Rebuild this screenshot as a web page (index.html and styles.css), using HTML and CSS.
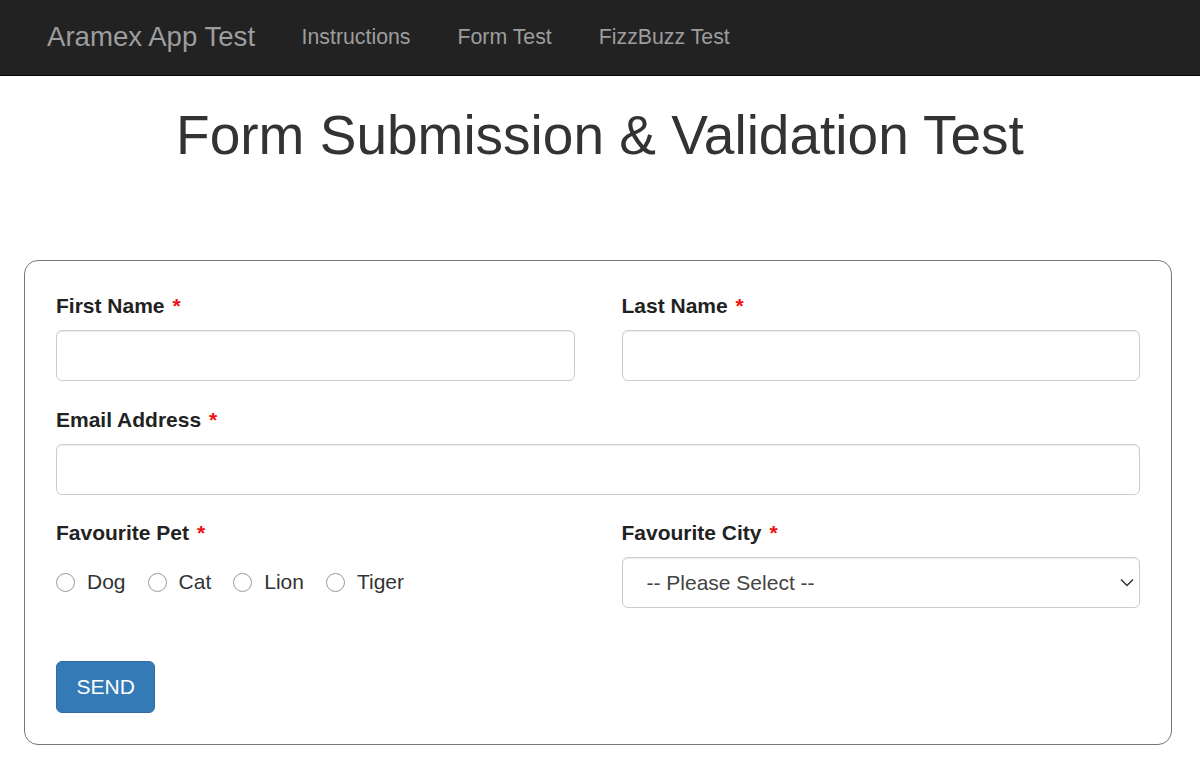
FILE: index.html
```html
<!DOCTYPE html>
<html lang="en">
<head>
<meta charset="utf-8">
<title>Form Submission &amp; Validation Test</title>
<link rel="stylesheet" href="styles.css">
</head>
<body>
<nav class="navbar">
  <a class="brand" href="#">Aramex App Test</a>
  <a class="nav-link" href="#">Instructions</a>
  <a class="nav-link" href="#">Form Test</a>
  <a class="nav-link" href="#">FizzBuzz Test</a>
</nav>
<main class="page">
  <h1 class="title">Form Submission &amp; Validation Test</h1>
  <form class="card">
    <div class="row">
      <div class="group">
        <label class="label">First Name <span class="req">*</span></label>
        <input class="control" type="text">
      </div>
      <div class="group">
        <label class="label">Last Name <span class="req">*</span></label>
        <input class="control" type="text">
      </div>
    </div>
    <div class="group">
      <label class="label">Email Address <span class="req">*</span></label>
      <input class="control" type="email">
    </div>
    <div class="row">
      <div class="group">
        <label class="label">Favourite Pet <span class="req">*</span></label>
        <div class="radios">
          <label class="radio"><input type="radio" name="pet"><span>Dog</span></label>
          <label class="radio"><input type="radio" name="pet"><span>Cat</span></label>
          <label class="radio"><input type="radio" name="pet"><span>Lion</span></label>
          <label class="radio"><input type="radio" name="pet"><span>Tiger</span></label>
        </div>
      </div>
      <div class="group">
        <label class="label">Favourite City <span class="req">*</span></label>
        <div class="select-wrap">
          <select class="control select">
            <option>-- Please Select --</option>
          </select>
          <svg class="chevron" width="14" height="9" viewBox="0 0 14 9"><path d="M1 1.5 L7 7.5 L13 1.5" fill="none" stroke="#333" stroke-width="1.5"/></svg>
        </div>
      </div>
    </div>
    <div class="actions">
      <button class="btn" type="button">SEND</button>
    </div>
  </form>
</main>
</body>
</html>
```
FILE: styles.css
```css
* { box-sizing: border-box; }
html, body { margin: 0; padding: 0; background: #fff; }
body {
  font-family: "Liberation Sans", Arial, sans-serif;
  font-size: 21px;
  line-height: 30px;
  color: #333;
}
.navbar {
  display: flex;
  align-items: center;
  height: 76px;
  padding: 0 0 1px 24px;
  background: #222;
  border-bottom: 1px solid #080808;
}
.brand {
  font-size: 27.6px;
  line-height: 30px;
  padding: 0 23px;
  color: #9d9d9d;
  text-decoration: none;
}
.nav-link {
  font-size: 21.3px;
  line-height: 30px;
  padding: 0 23.5px;
  color: #9d9d9d;
  text-decoration: none;
}
.title {
  margin: 29px 0 0;
  font-size: 55px;
  line-height: 60px;
  font-weight: 400;
  text-align: center;
  color: #333;
}
.card {
  margin: 95px 0 0 24px;
  width: 1148px;
  padding: 30px 31px 31px;
  border: 1.5px solid #777;
  border-radius: 14px;
}
.row {
  display: grid;
  grid-template-columns: 1fr 1fr;
  column-gap: 47px;
}
.group {
  margin-bottom: 23.5px;
}
.label {
  display: block;
  font-weight: 700;
  color: #222;
  margin-bottom: 9px;
}
.req { color: #f01010; margin-left: 2px; }
.control {
  display: block;
  width: 100%;
  height: 51px;
  padding: 9px 18px;
  font: inherit;
  color: #555;
  background: #fff;
  border: 1.5px solid #ccc;
  border-radius: 6px;
  box-shadow: inset 0 1px 1px rgba(0,0,0,.075);
  outline: none;
}
.radios {
  display: flex;
  align-items: center;
  height: 50px;
  gap: 22px;
}
.radio {
  display: flex;
  align-items: center;
  gap: 12px;
  color: #333;
}
.radio input {
  appearance: none;
  -webkit-appearance: none;
  margin: 0;
  width: 19px;
  height: 19px;
  border: 1.5px solid #9a9a9a;
  border-radius: 50%;
  background: #fff;
}
.select-wrap { position: relative; }
.select {
  appearance: none;
  -webkit-appearance: none;
  padding-left: 24px;
  color: #444;
}
.chevron {
  position: absolute;
  right: 6px;
  top: 21px;
  pointer-events: none;
}
.actions { padding-top: 29px; }
.btn {
  display: inline-block;
  height: 52px;
  padding: 9px 19.5px;
  font: inherit;
  color: #fff;
  background: #337ab7;
  border: 1.5px solid #2e6da4;
  border-radius: 6px;
}
```
